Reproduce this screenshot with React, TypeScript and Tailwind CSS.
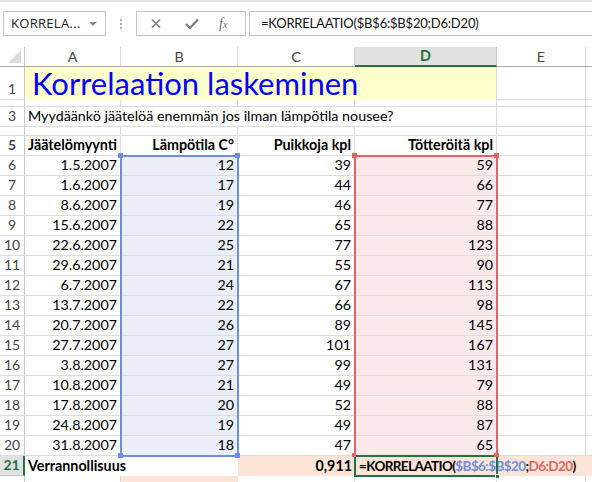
import React from "react";

const data: [string, number, number, number][] = [
  ["1.5.2007", 12, 39, 59],
  ["1.6.2007", 17, 44, 66],
  ["8.6.2007", 19, 46, 77],
  ["15.6.2007", 22, 65, 88],
  ["22.6.2007", 25, 77, 123],
  ["29.6.2007", 21, 55, 90],
  ["6.7.2007", 24, 67, 113],
  ["13.7.2007", 22, 66, 98],
  ["20.7.2007", 26, 89, 145],
  ["27.7.2007", 27, 101, 167],
  ["3.8.2007", 27, 99, 131],
  ["10.8.2007", 21, 49, 79],
  ["17.8.2007", 20, 52, 88],
  ["24.8.2007", 19, 49, 87],
  ["31.8.2007", 18, 47, 65],
];

const G = "border-r border-b border-[#dadcdd]";

function RowHead({ n, active }: { n?: number; active?: boolean }) {
  return (
    <div
      className={
        active
          ? "w-[25px] shrink-0 h-full flex items-end justify-center pb-[1px] bg-[#e1e1e1] border-r-2 border-r-[#217346] border-b border-b-[#c8c8c8] text-[#217346] font-bold text-[14px] leading-[18px]"
          : "w-[25px] shrink-0 h-full flex items-end justify-center pb-[1px] bg-white border-r border-r-[#c8c8c8] border-b border-b-[#dadcdd] text-[#444] text-[14px] leading-[18px] overflow-hidden"
      }
    >
      {n}
    </div>
  );
}

export default function App() {
  return (
    <div
      className="w-[592px] h-[482px] overflow-hidden bg-white text-black relative"
      style={{ fontFamily: "Lato, 'Liberation Sans', sans-serif" }}
    >
      {/* top strip */}
      <div className="h-[2px] bg-[#e3e3e3]" />
      {/* formula bar */}
      <div className="h-[45px] flex items-start pt-[9px] pl-[3px]">
        <div className="w-[103px] h-[25px] border border-[#c6c6c6] flex items-center pl-[7px] pr-[6px] justify-between">
          <span className="text-[13px] text-[#222] tracking-[0.3px]" style={{ fontFamily: "'Open Sans', sans-serif" }}>
            KORRELA...
          </span>
          <span className="w-0 h-0 border-l-[4px] border-r-[4px] border-t-[4px] border-l-transparent border-r-transparent border-t-[#8a8a8a] mr-[2px]" />
        </div>
        <div className="w-[30px] h-[25px] flex flex-col items-center justify-center gap-[2px]">
          <span className="w-[2px] h-[2px] bg-[#aaa]" />
          <span className="w-[2px] h-[2px] bg-[#aaa]" />
          <span className="w-[2px] h-[2px] bg-[#aaa]" />
        </div>
        <div className="w-[110px] h-[25px] border border-[#c6c6c6] flex items-center">
          <svg width="36" height="23" viewBox="0 0 36 23" className="ml-[1px]">
            <path d="M14 7.5 L22 15.5 M22 7.5 L14 15.5" stroke="#7a7a7a" strokeWidth="1.6" />
          </svg>
          <svg width="36" height="23" viewBox="0 0 36 23">
            <path d="M12 12 L16 16 L24 7.5" stroke="#7a7a7a" strokeWidth="2.2" fill="none" />
          </svg>
          <span className="ml-[9px] italic text-[14px] text-[#666]" style={{ fontFamily: "'Liberation Serif', serif" }}>
            f<span className="text-[10px]">x</span>
          </span>
        </div>
        <div className="ml-[3px] flex-1 h-[25px] border-t border-b border-l border-[#c6c6c6] flex items-center pl-[11px] text-[13px] tracking-[-0.2px] text-[#111] whitespace-nowrap">
          =KORRELAATIO($B$6:$B$20;D6:D20)
        </div>
      </div>

      {/* sheet */}
      <div className="relative text-[14.3px] leading-[18px]">
        {/* column headers */}
        <div className="flex h-[20px] border-b border-[#ababab] text-[#444]">
          <div className="w-[25px] shrink-0 h-full border-r border-[#c8c8c8] flex items-end justify-end pr-[3px] pb-[3px]">
            <svg width="13" height="13" viewBox="0 0 13 13">
              <path d="M13 0 L13 13 L0 13 Z" fill="#dcdcdc" />
            </svg>
          </div>
          <div className="w-[96px] shrink-0 border-r border-[#dadcdd] flex items-center justify-center">A</div>
          <div className="w-[117px] shrink-0 border-r border-[#dadcdd] flex items-center justify-center">B</div>
          <div className="w-[117px] shrink-0 border-r border-[#dadcdd] flex items-center justify-center">C</div>
          <div className="w-[142px] shrink-0 bg-[#e1e1e1] border-r border-[#c8c8c8] border-b-2 border-b-[#217346] -mb-[1px] flex items-center justify-center font-bold text-[#217346]">D</div>
          <div className="w-[89px] shrink-0 border-r border-[#dadcdd] flex items-center justify-center">E</div>
          <div className="flex-1" />
        </div>

        {/* row 1 */}
        <div className="flex h-[33px]">
          <RowHead n={1} />
          <div className="w-[472px] shrink-0 h-full bg-[#ffffcc] flex items-end pl-[7px] border-r border-[#dadcdd]">
            <span className="text-[31px] leading-[36px] text-[#0000ff] -mb-[1px] whitespace-nowrap">Korrelaation laskeminen</span>
          </div>
          <div className={"w-[89px] shrink-0 h-full " + G} />
          <div className="flex-1 border-b border-[#dadcdd]" />
        </div>
        {/* row 2 */}
        <div className="flex h-[7px]">
          <RowHead />
          <div className={"w-[96px] shrink-0 h-full " + G} />
          <div className={"w-[117px] shrink-0 h-full " + G} />
          <div className={"w-[117px] shrink-0 h-full " + G} />
          <div className={"w-[142px] shrink-0 h-full " + G} />
          <div className={"w-[89px] shrink-0 h-full " + G} />
          <div className="flex-1 border-b border-[#dadcdd]" />
        </div>
        {/* row 3 */}
        <div className="flex h-[20px]">
          <RowHead n={3} />
          <div className="w-[472px] shrink-0 h-full border-r border-b border-[#dadcdd] flex items-end pl-[3px] pb-[1px] whitespace-nowrap">
            Myydäänkö jäätelöä enemmän jos ilman lämpötila nousee?
          </div>
          <div className={"w-[89px] shrink-0 h-full " + G} />
          <div className="flex-1 border-b border-[#dadcdd]" />
        </div>
        {/* row 4 */}
        <div className="flex h-[9px]">
          <RowHead />
          <div className={"w-[96px] shrink-0 h-full " + G} />
          <div className={"w-[117px] shrink-0 h-full " + G} />
          <div className={"w-[117px] shrink-0 h-full " + G} />
          <div className={"w-[142px] shrink-0 h-full " + G} />
          <div className={"w-[89px] shrink-0 h-full " + G} />
          <div className="flex-1 border-b border-[#dadcdd]" />
        </div>
        {/* row 5 */}
        <div className="flex h-[20px] font-bold">
          <RowHead n={5} />
          <div className={"w-[96px] shrink-0 h-full flex items-end pl-[3px] pb-[1px] whitespace-nowrap " + G}>Jäätelömyynti</div>
          <div className={"w-[117px] shrink-0 h-full flex items-end justify-end pr-[3px] pb-[1px] " + G}>Lämpötila C°</div>
          <div className={"w-[117px] shrink-0 h-full flex items-end justify-end pr-[3px] pb-[1px] " + G}>Puikkoja kpl</div>
          <div className={"w-[142px] shrink-0 h-full flex items-end justify-end pr-[3px] pb-[1px] " + G}>Tötteröitä kpl</div>
          <div className={"w-[89px] shrink-0 h-full " + G} />
          <div className="flex-1 border-b border-[#dadcdd]" />
        </div>
        {data.map((r, i) => (
          <div key={i} className="flex h-[20px]">
            <RowHead n={i + 6} />
            <div className={"w-[96px] shrink-0 h-full flex items-end justify-end pr-[3px] pb-[1px] " + G}>{r[0]}</div>
            <div className={"w-[117px] shrink-0 h-full flex items-end justify-end pr-[3px] pb-[1px] bg-[#eaeffa] " + G}>{r[1]}</div>
            <div className={"w-[117px] shrink-0 h-full flex items-end justify-end pr-[3px] pb-[1px] " + G}>{r[2]}</div>
            <div className={"w-[142px] shrink-0 h-full flex items-end justify-end pr-[3px] pb-[1px] bg-[#fce9e9] " + G}>{r[3]}</div>
            <div className={"w-[89px] shrink-0 h-full " + G} />
            <div className="flex-1 border-b border-[#dadcdd]" />
          </div>
        ))}
        {/* row 21 */}
        <div className="flex h-[20px] font-bold">
          <RowHead n={21} active />
          <div className="w-[213px] shrink-0 h-full flex items-end pl-[3px] pb-[1px] whitespace-nowrap bg-white">Verrannollisuus</div>
          <div className="w-[117px] shrink-0 h-full flex items-end justify-end pr-[3px] pb-[1px] bg-[#fce4d6]">0,911</div>
          <div className="flex-1 h-full flex items-end pl-[4px] pb-[1px] bg-[#fce4d6] whitespace-nowrap text-[13.5px] tracking-[-0.6px]">
            <span>=KORRELAATIO(</span>
            <span className="text-[#6d8fdc]">$B$6:$B$20</span>
            <span>;</span>
            <span className="text-[#e06666]">D6:D20</span>
            <span>)</span>
          </div>
        </div>
        {/* row 22 */}
        <div className="flex h-[20px]">
          <RowHead />
          <div className={"w-[96px] shrink-0 h-full " + G} />
          <div className="w-[117px] shrink-0 h-full bg-[#fce4d6]" />
          <div className={"w-[117px] shrink-0 h-full " + G} />
          <div className={"w-[142px] shrink-0 h-full " + G} />
          <div className={"w-[89px] shrink-0 h-full " + G} />
          <div className="flex-1 border-b border-[#dadcdd]" />
        </div>

        {/* selection overlays (sheet top = 47) */}
        <div className="absolute left-[120px] top-[108px] w-[119px] h-[302px] border-2 border-[#6d8fdc] pointer-events-none" />
        <div className="absolute left-[118px] top-[106px] w-[5px] h-[5px] bg-[#6d8fdc]" />
        <div className="absolute left-[235px] top-[106px] w-[5px] h-[5px] bg-[#6d8fdc]" />
        <div className="absolute left-[118px] top-[406px] w-[5px] h-[5px] bg-[#6d8fdc]" />
        <div className="absolute left-[235px] top-[406px] w-[5px] h-[5px] bg-[#6d8fdc]" />

        <div className="absolute left-[354px] top-[108px] w-[144px] h-[302px] border-2 border-[#e06666] pointer-events-none" />
        <div className="absolute left-[352px] top-[106px] w-[5px] h-[5px] bg-[#e06666]" />
        <div className="absolute left-[494px] top-[106px] w-[5px] h-[5px] bg-[#e06666]" />

        <div className="absolute left-[354px] top-[408px] w-[144px] h-[22px] border-2 border-[#217346] pointer-events-none" />
        <div className="absolute left-[352px] top-[406px] w-[4px] h-[4px] bg-[#e06666]" />
        <div className="absolute left-[494px] top-[406px] w-[5px] h-[4px] bg-[#e06666]" />
        <div className="absolute left-[495px] top-[427px] w-[5px] h-[5px] bg-[#217346] border border-white" />
      </div>
    </div>
  );
}
